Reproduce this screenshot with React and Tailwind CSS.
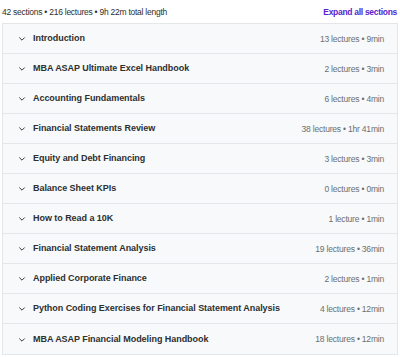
import React from "react";

const sections = [
  { title: "Introduction", lectures: "13 lectures", length: "9min" },
  { title: "MBA ASAP Ultimate Excel Handbook", lectures: "2 lectures", length: "3min" },
  { title: "Accounting Fundamentals", lectures: "6 lectures", length: "4min" },
  { title: "Financial Statements Review", lectures: "38 lectures", length: "1hr 41min" },
  { title: "Equity and Debt Financing", lectures: "3 lectures", length: "3min" },
  { title: "Balance Sheet KPIs", lectures: "0 lectures", length: "0min" },
  { title: "How to Read a 10K", lectures: "1 lecture", length: "1min" },
  { title: "Financial Statement Analysis", lectures: "19 lectures", length: "36min" },
  { title: "Applied Corporate Finance", lectures: "2 lectures", length: "1min" },
  { title: "Python Coding Exercises for Financial Statement Analysis", lectures: "4 lectures", length: "12min" },
  { title: "MBA ASAP Financial Modeling Handbook", lectures: "18 lectures", length: "12min" },
];

function Chevron() {
  return (
    <svg width="8" height="8" viewBox="0 0 10 10" fill="none" className="shrink-0">
      <path d="M2 3.5 L5 6.5 L8 3.5" stroke="#2d2f31" strokeWidth="1.2" strokeLinecap="round" strokeLinejoin="round" />
    </svg>
  );
}

export default function App() {
  return (
    <div
      className="w-[400px] h-[357px] overflow-hidden bg-white pl-[2px] pr-[2px]"
      style={{ fontFamily: "'Liberation Sans', Arial, sans-serif" }}
    >
      <div className="flex items-center justify-between h-[23px] pt-[1px]">
        <span className="text-[8.5px] tracking-[-0.25px] text-[#2d2f31]">
          42 sections • 216 lectures • 9h 22m total length
        </span>
        <span className="text-[8.5px] tracking-[-0.3px] font-bold text-[#5624d0] pr-[1px]">
          Expand all sections
        </span>
      </div>

      <div className="border border-[#e4e7ea]">
        {sections.map((section, index) => (
          <div
            key={index}
            className="flex items-center justify-between h-[30px] bg-[#f7f9fa] border-b border-[#e4e7ea] last:border-b-0 pl-[15px] pr-[13px] pt-[1px]"
          >
            <div className="flex items-center gap-[7px]">
              <Chevron />
              <span className="text-[9px] tracking-[-0.05px] font-bold text-[#2d2f31]">
                {section.title}
              </span>
            </div>
            <span className="text-[8.5px] tracking-[-0.2px] text-[#6a6f73]">
              {section.lectures} • {section.length}
            </span>
          </div>
        ))}
      </div>
    </div>
  );
}
